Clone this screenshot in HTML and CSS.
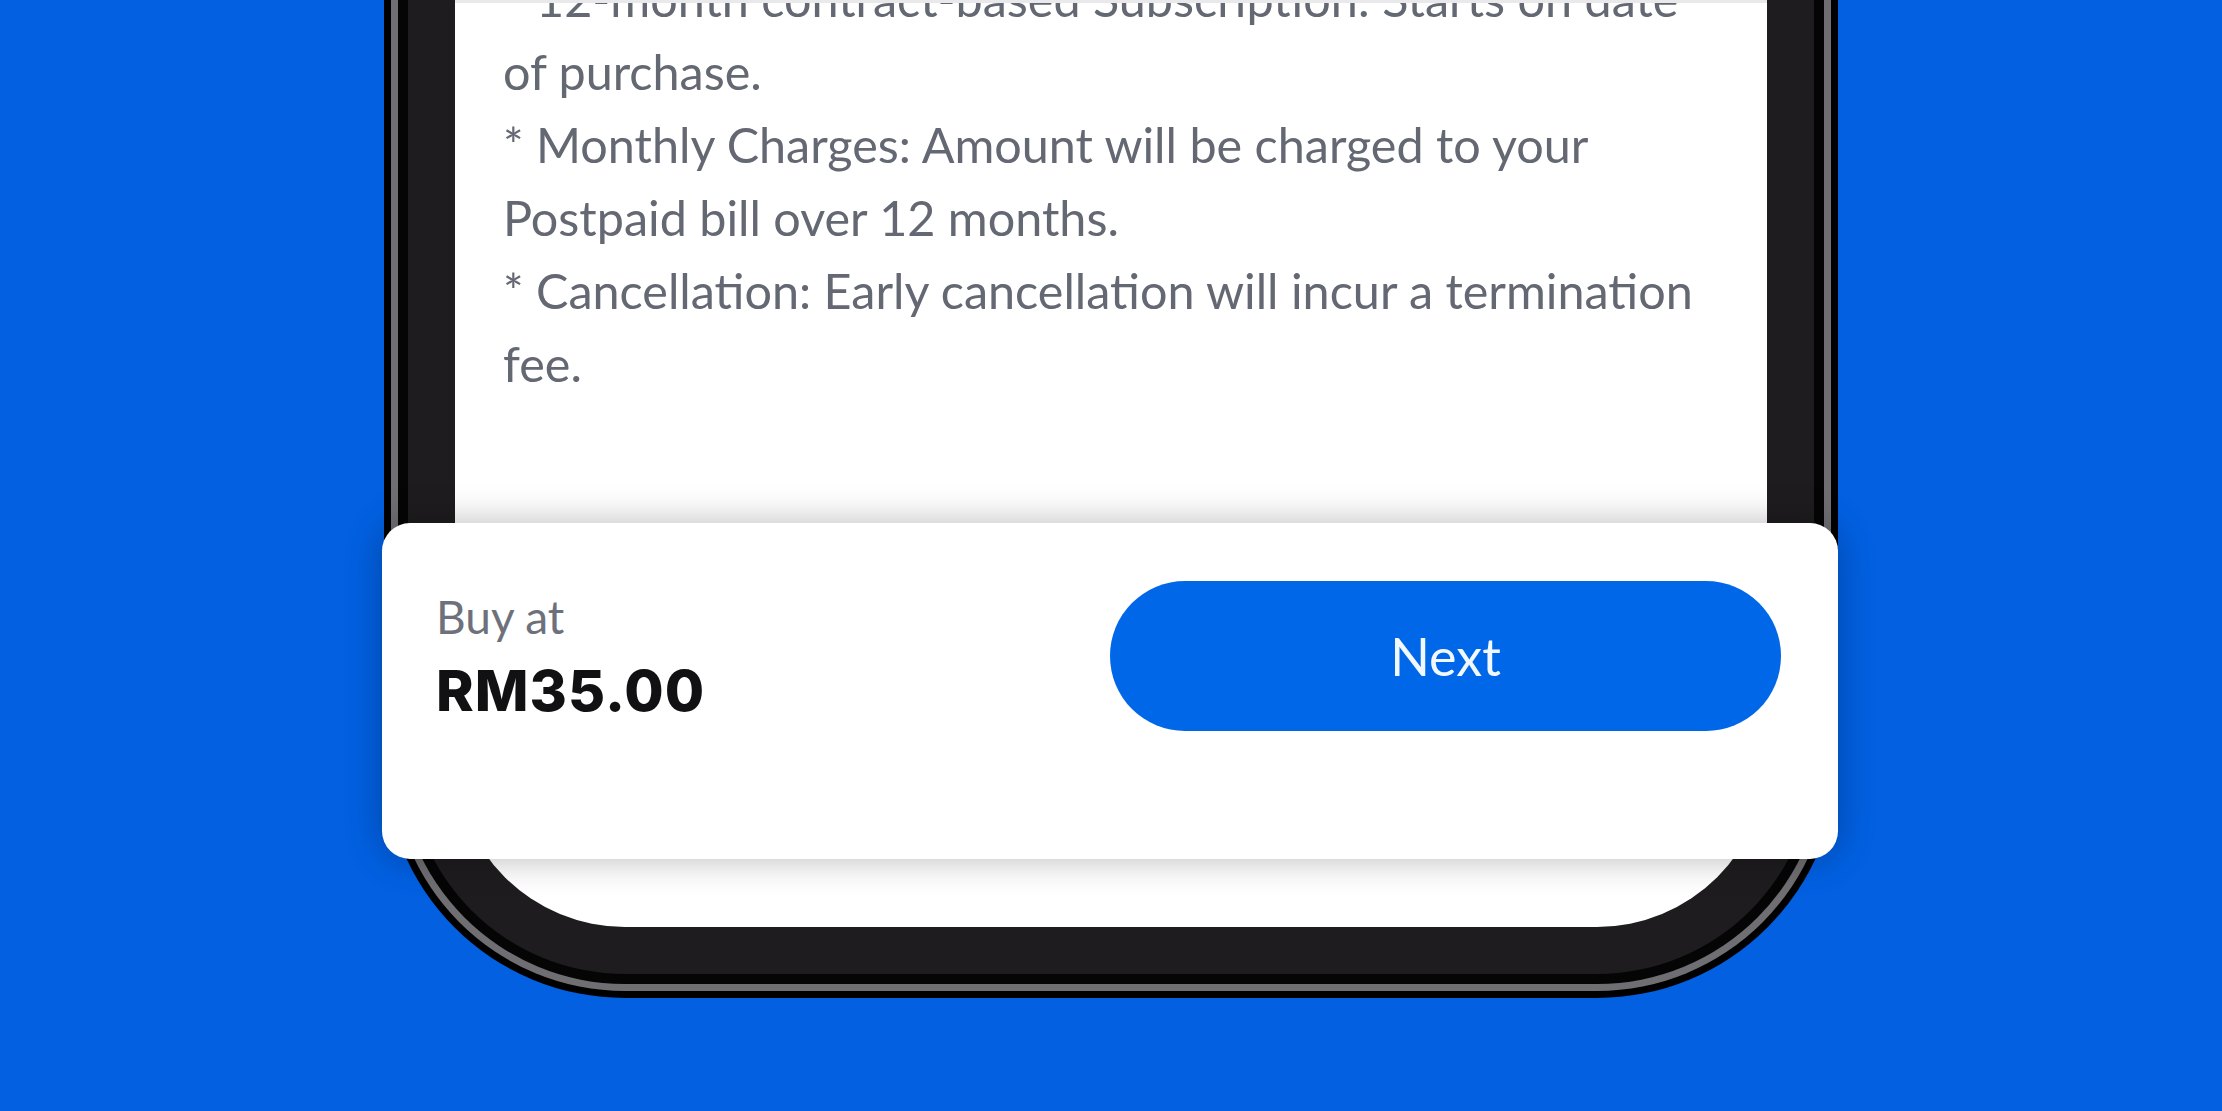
FILE: index.html
```html
<!DOCTYPE html>
<html lang="en">
<head>
<meta charset="utf-8">
<title>Subscription checkout</title>
<link rel="stylesheet" href="styles.css">
</head>
<body>
<div class="stage">
  <div class="phone">
    <div class="ring">
      <div class="rim">
        <div class="bezel">
          <div class="screen">
            <div class="terms">
              <p>* 12-month contract-based Subscription: Starts on date of purchase.</p>
              <p>* Monthly Charges: Amount will be charged to your Postpaid bill over 12 months.</p>
              <p>* Cancellation: Early cancellation will incur a termination fee.</p>
            </div>
          </div>
        </div>
      </div>
    </div>
  </div>
  <div class="buy-card">
    <div class="price">
      <div class="price-label">Buy at</div>
      <div class="price-value">RM35.00</div>
    </div>
    <button class="next-btn" type="button">Next</button>
  </div>
</div>
</body>
</html>
```

FILE: styles.css
```css
html, body {
  margin: 0;
  padding: 0;
}
body {
  background: #0260e1;
  font-family: "Lato", "Liberation Sans", sans-serif;
}
.stage {
  position: relative;
  width: 2222px;
  height: 1111px;
  overflow: hidden;
}
.phone {
  box-sizing: border-box;
  width: 1454px;
  height: 1069px;
  margin: -71px auto 0;
  padding: 7px;
  background: #000;
  border-radius: 0 0 241px 241px;
  display: flex;
}
.ring {
  flex: 1;
  display: flex;
  padding: 7px;
  background: #6f6e72;
  border-radius: 0 0 234px 234px;
}
.rim {
  flex: 1;
  display: flex;
  padding: 10px;
  background: #050505;
  border-radius: 0 0 227px 227px;
}
.bezel {
  flex: 1;
  display: flex;
  padding: 47px;
  background: #1e1c1e;
  border-radius: 0 0 217px 217px;
}
.screen {
  flex: 1;
  background: #fff;
  border-radius: 0 0 170px 170px;
  border-top: 3px solid #e9e9eb;
  overflow: hidden;
  padding: 0 52px 0 48px;
}
.terms {
  margin-top: -41px;
  color: #646873;
  font-size: 48.5px;
  line-height: 73px;
}
.terms p {
  margin: 0;
}
.buy-card {
  position: absolute;
  left: 382px;
  top: 523px;
  box-sizing: border-box;
  width: 1456px;
  height: 336px;
  background: #fff;
  border-radius: 28px;
  box-shadow: 0 0 36px rgba(0, 0, 0, 0.28);
  padding: 58px 57px 128px 54px;
  display: flex;
  align-items: center;
  justify-content: space-between;
}
.price-label {
  color: #6e717b;
  font-size: 46px;
  line-height: 56px;
}
.price-value {
  margin-top: 14px;
  color: #111113;
  font-family: "Inter", "Liberation Sans", sans-serif;
  font-weight: 800;
  font-size: 57px;
  line-height: 64px;
  letter-spacing: 1px;
}
.next-btn {
  width: 671px;
  height: 150px;
  border: none;
  border-radius: 75px;
  background: #0068e8;
  color: #f2f8ff;
  font-family: "Lato", "Liberation Sans", sans-serif;
  font-size: 52px;
  padding: 0;
}
```
